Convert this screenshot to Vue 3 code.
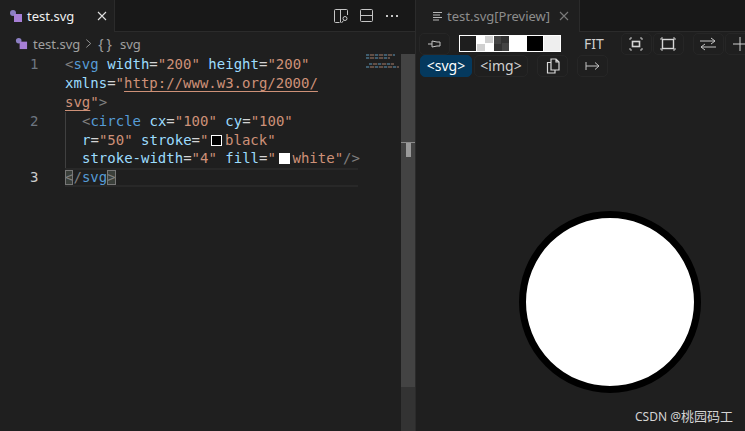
<script setup>
const swatches = ['dark', 'checker', 'mid', 'white', 'black', 'light']
</script>

<template>
  <div class="app">
    <section class="left">
      <header class="tabs">
        <div class="tab active">
          <svg class="file" viewBox="0 0 14 14" width="14" height="14"><circle cx="4" cy="4" r="3" fill="#8c7fc4"/><rect x="5" y="5" width="8" height="8" fill="#a77fd6"/></svg>
          <span class="name">test.svg</span>
          <svg class="close" viewBox="0 0 10 10" width="10" height="10"><path d="M1 1l8 8M9 1l-8 8" stroke="#e0e0e0" stroke-width="1.1" fill="none"/></svg>
        </div>
        <div class="tab-rest">
          <svg viewBox="0 0 16 16" width="16" height="16" class="act"><path d="M6.5 14.5H2.5a1 1 0 0 1-1-1v-11a1 1 0 0 1 1-1h11a1 1 0 0 1 1 1V7M7.5 1.5v13" stroke="#c5c5c5" fill="none"/><circle cx="12" cy="10.5" r="2" stroke="#c5c5c5" fill="none"/><path d="M10.5 12.5l-2 2.5" stroke="#c5c5c5"/></svg>
          <svg viewBox="0 0 16 16" width="16" height="16" class="act"><rect x="1.5" y="1.5" width="12" height="12" rx="1" stroke="#c5c5c5" fill="none"/><path d="M1.5 7.5h12" stroke="#c5c5c5"/></svg>
          <span class="dots"><i></i><i></i><i></i></span>
        </div>
      </header>
      <nav class="crumbs">
        <svg class="file" viewBox="0 0 14 14" width="13" height="13"><circle cx="4" cy="4" r="3" fill="#8c7fc4"/><rect x="5" y="5" width="8" height="8" fill="#a77fd6"/></svg>
        <span>test.svg</span>
        <svg viewBox="0 0 8 12" width="7" height="11"><path d="M1.5 1.5l5 4.5-5 4.5" stroke="#a0a0a0" fill="none"/></svg>
        <span class="braces">{}</span>
        <span>svg</span>
      </nav>
      <div class="editor">
        <div class="gutter">
          <div class="ln">1</div>
          <div class="ln"></div>
          <div class="ln"></div>
          <div class="ln">2</div>
          <div class="ln"></div>
          <div class="ln"></div>
          <div class="ln cur">3</div>
        </div>
        <div class="code">
          <div class="row"><b class="p">&lt;</b><b class="t">svg</b> <b class="a">width</b><b class="w">=</b><b class="s">"200"</b> <b class="a">height</b><b class="w">=</b><b class="s">"200"</b></div>
          <div class="row"><b class="a">xmlns</b><b class="w">=</b><b class="s">"</b><b class="s u">http://www.w3.org/2000/</b></div>
          <div class="row"><b class="s u">svg</b><b class="s">"</b><b class="p">&gt;</b></div>
          <div class="row ind"><b class="p">&lt;</b><b class="t">circle</b> <b class="a">cx</b><b class="w">=</b><b class="s">"100"</b> <b class="a">cy</b><b class="w">=</b><b class="s">"100"</b></div>
          <div class="row ind"><b class="a">r</b><b class="w">=</b><b class="s">"50"</b> <b class="a">stroke</b><b class="w">=</b><b class="s">"</b><i class="deco blk"></i><b class="s">black"</b></div>
          <div class="row ind"><b class="a">stroke-width</b><b class="w">=</b><b class="s">"4"</b> <b class="a">fill</b><b class="w">=</b><b class="s">"</b><i class="deco wht"></i><b class="s">white"</b><b class="p">/&gt;</b></div>
          <div class="row current"><b class="p box">&lt;</b><b class="p">/</b><b class="t">svg</b><b class="p box">&gt;</b></div>
        </div>
        <div class="minimap">
          <i style="width:29px"></i><i style="width:24px"></i><i style="width:8px;opacity:0"></i><i style="width:25px;margin-left:3px"></i><i style="width:33px"></i>
        </div>
        <div class="scroll">
          <i class="thumb"></i>
          <i class="cursor"></i>
        </div>
      </div>
    </section>

    <section class="right">
      <header class="tabs">
        <div class="tab preview">
          <svg viewBox="0 0 10 12" width="10" height="12"><path d="M0 2.5h9M0 5h7M0 7.5h9M0 10h6" stroke="#b8b8b8" fill="none"/></svg>
          <span class="name dim">test.svg[Preview]</span>
          <svg class="close" viewBox="0 0 10 10" width="10" height="10"><path d="M1 1l8 8M9 1l-8 8" stroke="#7a7a7a" stroke-width="1.1" fill="none"/></svg>
        </div>
        <div class="tab-fill"></div>
      </header>
      <div class="bar">
        <button class="btn icon first">
          <svg viewBox="0 0 16 12" width="16" height="12"><path d="M1 6h4M5 3v6M5 3l5 1h3v4h-3l-5 1" stroke="#c5c5c5" fill="none"/></svg>
        </button>
        <div class="swatches">
          <i v-for="s in swatches" :key="s" :class="s"></i>
        </div>
        <span class="fit">FIT</span>
        <button class="btn icon">
          <svg viewBox="0 0 14 14" width="14" height="14"><path d="M1 3V1h2M11 1h2v2M13 11v2h-2M3 13H1v-2" stroke="#c5c5c5" fill="none"/><rect x="3.5" y="4.5" width="7" height="5" stroke="#d5d5d5" stroke-width="1.6" fill="none"/></svg>
        </button>
        <button class="btn icon">
          <svg viewBox="0 0 16 14" width="16" height="14"><path d="M1 3V1h2M13 1h2v2M15 11v2h-2M3 13H1v-2" stroke="#c5c5c5" fill="none"/><rect x="2.5" y="2.5" width="11" height="9" stroke="#d5d5d5" stroke-width="1.4" fill="none"/></svg>
        </button>
        <button class="btn icon gap">
          <svg viewBox="0 0 16 14" width="16" height="14"><path d="M0 4h15M11 1l4 3-4 3M16 10H1M5 7l-4 3 4 3" stroke="#c5c5c5" fill="none"/></svg>
        </button>
        <button class="btn icon">
          <svg viewBox="0 0 14 14" width="14" height="14"><path d="M7 0v14M0 7h14" stroke="#d0d0d0" fill="none"/></svg>
        </button>
      </div>
      <div class="bar second">
        <button class="btn on">&lt;svg&gt;</button>
        <button class="btn txt">&lt;img&gt;</button>
        <button class="btn icon copy">
          <svg viewBox="0 0 16 16" width="16" height="16"><path d="M6 1h5l3 3v8H6zM11 1v3h3M6 4.5H2.5V15H10v-3" stroke="#d8d8d8" fill="none" stroke-width="1.2"/></svg>
        </button>
        <button class="btn icon arrow">
          <svg viewBox="0 0 15 10" width="15" height="10"><path d="M1 1v8M1 5h13M10 1.5l4 3.5-4 3.5" stroke="#c5c5c5" fill="none"/></svg>
        </button>
      </div>
      <div class="canvas">
        <svg viewBox="0 0 200 200" width="350" height="350" class="drawing"><circle cx="100" cy="100" r="50" stroke="black" stroke-width="4" fill="white"/></svg>
        <span class="mark">CSDN @<span class="cjk">桃园码工</span></span>
      </div>
    </section>
  </div>
</template>

<style scoped>
.app {
  width: 745px;
  height: 431px;
  display: flex;
  overflow: hidden;
  background: #1f1f1f;
  font-family: "Noto Sans", "Noto Sans CJK SC", sans-serif;
}
.left {
  width: 415px;
  flex: none;
  display: flex;
  flex-direction: column;
  border-right: 1px solid #2b2b2b;
}
.right {
  flex: 1;
  min-width: 0;
  display: flex;
  flex-direction: column;
}
.tabs {
  height: 32px;
  flex: none;
  display: flex;
  background: #181818;
}
.tab {
  display: flex;
  align-items: center;
  box-sizing: border-box;
  height: 32px;
  background: #1f1f1f;
  font-size: 13px;
  flex: none;
}
.active {
  width: 115px;
  padding-left: 9px;
  border-right: 1px solid #2b2b2b;
}
.preview {
  width: 164px;
  padding-left: 17px;
  gap: 4px;
  border-right: 1px solid #2b2b2b;
}
.name {
  color: #f0f0f0;
  margin-left: 4px;
}
.dim {
  color: #8d8d8d;
  margin-left: 0;
}
.active .close {
  margin-left: 23px;
}
.preview .close {
  margin-left: 5px;
}
.tab-rest {
  flex: 1;
  display: flex;
  align-items: center;
  padding-left: 218px;
  border-bottom: 1px solid #2b2b2b;
}
.act {
  margin-right: 10px;
  flex: none;
}
.tab-rest .act + .act {
  margin-right: 11px;
}
.dots {
  display: flex;
  gap: 3px;
}
.dots i {
  width: 2px;
  height: 2px;
  background: #c5c5c5;
}
.tab-fill {
  flex: 1;
  border-bottom: 1px solid #2b2b2b;
}
.crumbs {
  height: 23px;
  flex: none;
  display: flex;
  align-items: center;
  gap: 5px;
  padding-left: 15px;
  color: #a0a0a0;
  font-size: 13px;
}
.braces {
  font-size: 14px;
  letter-spacing: 3px;
  margin-left: 1px;
}
.editor {
  flex: 1;
  display: flex;
  position: relative;
  min-height: 0;
}
.gutter {
  width: 65px;
  flex: none;
  font: 14px/18.9px "DejaVu Sans Mono", monospace;
  color: #6e7681;
}
.ln {
  height: 18.9px;
  padding-left: 30px;
}
.cur {
  color: #cccccc;
}
.code {
  width: 293px;
  flex: none;
  font: 14px/18.9px "DejaVu Sans Mono", monospace;
  white-space: pre;
}
.row {
  height: 18.9px;
  box-sizing: border-box;
}
.row b {
  font-weight: 400;
}
.ind {
  padding-left: 16px;
  border-left: 1px solid #404040;
}
.p { color: #808080; }
.t { color: #569cd6; }
.a { color: #9cdcfe; }
.w { color: #d4d4d4; }
.s { color: #ce9178; }
.u { text-decoration: underline; text-underline-offset: 3px; }
.deco {
  display: inline-block;
  width: 11px;
  height: 11px;
  box-sizing: border-box;
  margin: 0 2.6px 0 3px;
  vertical-align: -1px;
}
.blk {
  background: #000;
  border: 1px solid #fff;
}
.wht {
  background: #fff;
}
.current {
  border-top: 2px solid #282828;
  border-bottom: 2px solid #282828;
  line-height: 15px;
}
.box {
  outline: 1px solid #777;
  outline-offset: -1px;
  background: #3a3f3a;
  display: inline-block;
  height: 15px;
}
.minimap {
  position: absolute;
  left: 366px;
  top: -1px;
  width: 34px;
  display: flex;
  flex-direction: column;
  gap: 0;
  opacity: 0.75;
}
.minimap i {
  display: block;
  height: 2px;
  margin-bottom: 1px;
  background: repeating-linear-gradient(90deg, #4a7289 0 3px, #2c3036 3px 4px, #7a5f52 4px 8px, #33302f 8px 9px);
}
.scroll {
  position: absolute;
  left: 401px;
  top: -1px;
  bottom: 0;
  width: 14px;
  background: #333333;
}
.thumb {
  display: block;
  height: 333px;
  background: #434343;
}
.cursor {
  position: absolute;
  left: 0;
  top: 88px;
  width: 14px;
  height: 1px;
  background: #8a8a8a;
}
.cursor::after {
  content: "";
  position: absolute;
  left: 5px;
  top: 1px;
  width: 5px;
  height: 14px;
  background: #9a9a9a;
}
.bar {
  height: 23px;
  flex: none;
  display: flex;
  align-items: center;
  padding-left: 3px;
}
.second {
  padding-left: 4px;
  margin-top: -1px;
}
.btn {
  height: 22px;
  border: 1px solid #262626;
  border-radius: 5px;
  background: transparent;
  padding: 0;
  color: #cfcfcf;
  font: 14px "Noto Sans", sans-serif;
  display: flex;
  align-items: center;
  justify-content: center;
  flex: none;
}
.icon {
  width: 31px;
  margin-left: 1px;
}
.first {
  margin-left: 0;
}
.gap {
  margin-left: 9px;
}
.swatches {
  display: flex;
  gap: 1px;
  margin-left: 9px;
  border: 1px solid #fff;
  height: 17px;
  box-sizing: border-box;
  background: #fff;
  width: 102px;
  flex: none;
}
.swatches i {
  flex: 1;
  display: block;
}
.swatches .dark { background: #1e1e1e; }
.swatches .checker {
  background: conic-gradient(#d0d0d0 25%, #fff 0 50%, #d0d0d0 0 75%, #fff 0) 0 0 / 100% 100%;
}
.swatches .mid {
  background: conic-gradient(#333 25%, #444 0 50%, #333 0 75%, #444 0) 0 0 / 100% 100%;
}
.swatches .white { background: #fff; }
.swatches .black { background: #000; }
.swatches .light { background: #eee; }
.fit {
  color: #cfcfcf;
  font-size: 14px;
  margin: 0 16px 0 23px;
  flex: none;
}
.on {
  width: 52px;
  background: #04395e;
  border-color: #04395e;
  color: #fff;
}
.txt {
  width: 54px;
  margin-left: 2px;
}
.copy,
.arrow {
  margin-left: 9px;
}
.canvas {
  flex: 1;
  position: relative;
  min-height: 0;
  overflow: hidden;
}
.drawing {
  display: block;
  margin: 50px 0 0 19px;
}
.mark {
  position: absolute;
  right: 12px;
  bottom: 6px;
  color: #d4d4d4;
  font-size: 12px;
  white-space: nowrap;
}
.cjk {
  font-size: 13px;
}
</style>
